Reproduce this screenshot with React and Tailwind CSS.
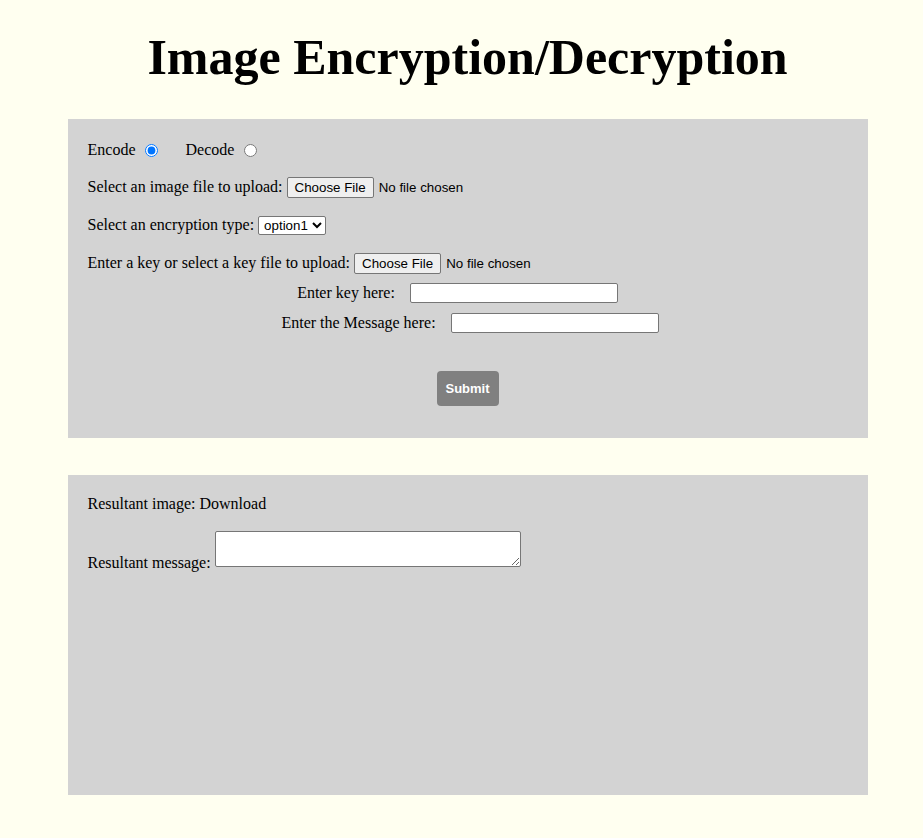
const fileCls = "ml-[4px] text-[13.33px] file:mr-[5px] file:h-[21px] file:px-[7px] file:bg-[#efefef] file:border file:border-solid file:border-[#767676] file:rounded-[2px] file:text-black file:text-[13.33px]";
const sans = { fontFamily: '"Liberation Sans", Arial, sans-serif' };

export default function App() {
  return (
    <div className="min-h-[838px] bg-[#fffff0] text-black pl-[12px] pt-[27px] pb-[43px]" style={{ fontFamily: '"Liberation Serif", "Times New Roman", serif' }}>
      <h1 className="text-center text-[50px] font-bold leading-[60px] m-0">Image Encryption/Decryption</h1>
      <div className="w-[800px] mx-auto mt-[32px] bg-[#d3d3d3] px-[20px] pt-[20px] h-[319px] text-[16px]">
        <div className="flex items-center h-[22px]">
          <span>Encode</span>
          <input type="radio" name="mode" defaultChecked className="ml-[10px] w-[13px] h-[13px]" />
          <span className="ml-[27px]">Decode</span>
          <input type="radio" name="mode" className="ml-[10px] w-[13px] h-[13px]" />
        </div>
        <div className="mt-[15px] flex items-center h-[22px]">
          <span>Select an image file to upload:</span>
          <input type="file" className={fileCls} style={sans} />
        </div>
        <div className="mt-[16px] flex items-center h-[22px]">
          <span>Select an encryption type:</span>
          <select className="ml-[4px] text-[13.33px] bg-white border border-[#767676] rounded-[2px] h-[19px] px-[1px]" style={sans}>
            <option>option1</option>
            <option>option2</option>
          </select>
        </div>
        <div className="mt-[16px] flex items-center h-[22px]">
          <span>Enter a key or select a key file to upload:</span>
          <input type="file" className={fileCls} style={sans} />
        </div>
        <div className="mt-[8px] flex items-center justify-center h-[22px] pr-[20px]">
          <span>Enter key here:</span>
          <input type="text" className="ml-[15px] w-[208px] h-[20px] bg-white border border-[#767676] rounded-[2px]" />
        </div>
        <div className="mt-[8px] flex items-center justify-center h-[22px] pl-[5px]">
          <span>Enter the Message here:</span>
          <input type="text" className="ml-[15px] w-[208px] h-[20px] bg-white border border-[#767676] rounded-[2px]" />
        </div>
        <div className="mt-[37px] flex justify-center">
          <button className="w-[62px] h-[35px] bg-[#808080] text-white rounded-[4px] text-[13px] font-bold" style={sans}>Submit</button>
        </div>
      </div>
      <div className="w-[800px] mx-auto mt-[37px] bg-[#d3d3d3] px-[20px] pt-[19px] h-[320px] text-[16px]">
        <div className="h-[20px] leading-[20px]">Resultant image: Download</div>
        <div className="mt-[17px] flex items-end">
          <span className="leading-[18px] mb-[-5px]">Resultant message:</span>
          <textarea className="ml-[4px] w-[306px] h-[36px] bg-white border border-[#767676] rounded-[2px] resize-y" />
        </div>
      </div>
    </div>
  );
}
